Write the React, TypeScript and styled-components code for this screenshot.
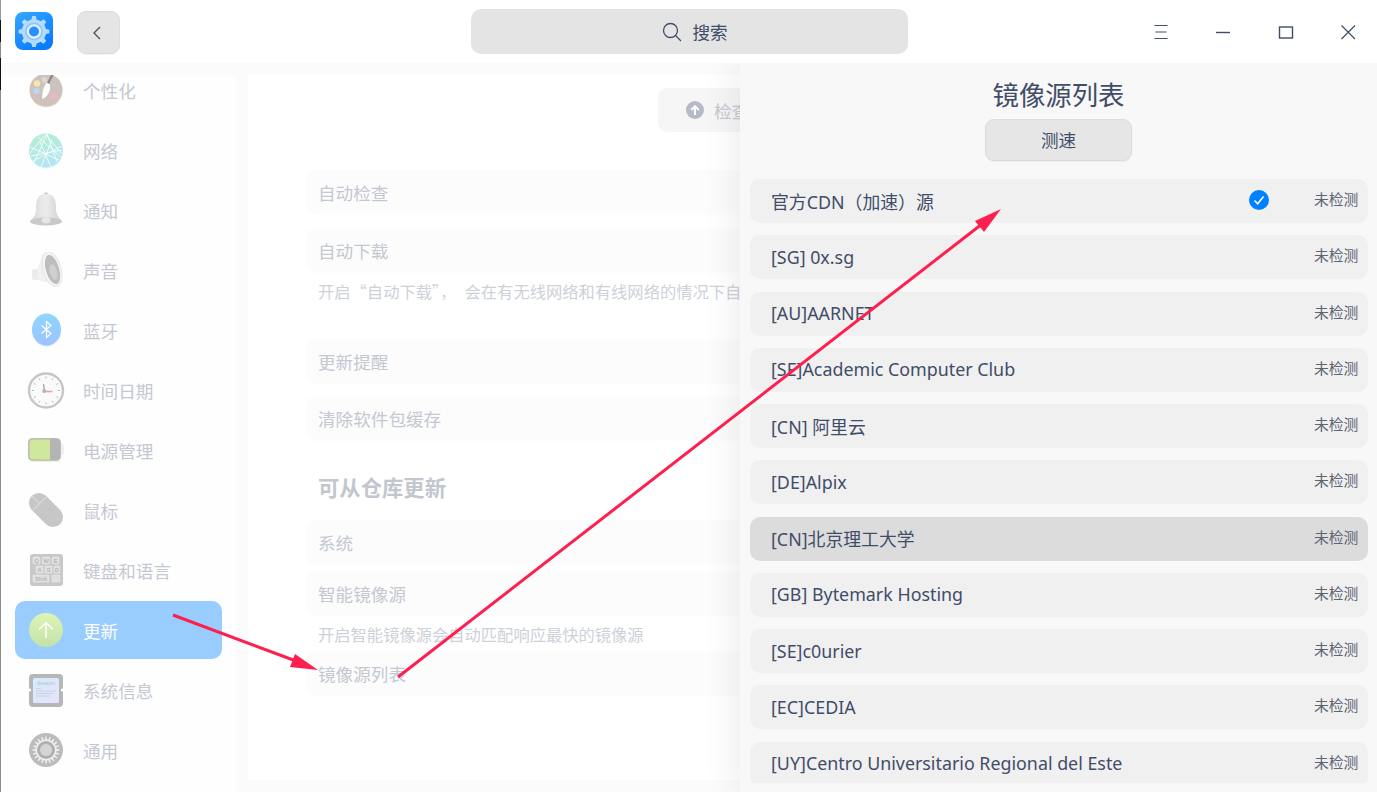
import React from "react";
import styled, { createGlobalStyle } from "styled-components";

const Global = createGlobalStyle`
  html, body { margin: 0; padding: 0; background: #fff; overflow: hidden; }
  body { font-family: "Noto Sans", "Noto Sans CJK SC", sans-serif; }
  * { box-sizing: border-box; }
`;

const Root = styled.div`
  position: relative;
  display: flex;
  width: 1377px;
  height: 792px;
  overflow: hidden;
`;
const EdgeStrip = styled.div`
  flex: 0 0 1px;
  background: linear-gradient(
    to bottom,
    #9a9a9a 0 20px,
    #111 20px 42px,
    #8a8a8a 42px 58px,
    #111 58px 90px,
    #8c8c8c 90px
  );
`;
const Window = styled.div`
  flex: 1;
  min-width: 0;
  display: flex;
  flex-direction: column;
`;
const TitleBar = styled.header`
  position: relative;
  z-index: 3;
  flex: 0 0 63px;
  background: #fff;
  display: flex;
  align-items: flex-start;
`;
const Logo = styled.div`
  margin: 12px 0 0 14px;
  width: 38px;
  height: 38px;
  flex: none;
  svg { display: block; }
`;
const BackButton = styled.button`
  margin: 11px 0 0 24px;
  width: 43px;
  height: 43px;
  flex: none;
  padding: 0 3px 0 0;
  display: flex;
  align-items: center;
  justify-content: center;
  background: #e5e5e5;
  border: 1px solid #dcdcdc;
  border-radius: 9px;
  box-shadow: 0 1px 1px rgba(0, 0, 0, 0.04);
`;
const SearchBox = styled.div`
  margin: 9px 0 0 351px;
  width: 437px;
  height: 45px;
  flex: none;
  display: flex;
  align-items: center;
  justify-content: center;
  gap: 10px;
  background: #e4e4e4;
  border-radius: 10px;
  color: #414d68;
  font-size: 17.6px;
  padding-left: 11px;
`;
const WindowControls = styled.div`
  margin-left: 243px;
  margin-top: 22px;
  display: flex;
  gap: 42.3px;
`;
const ControlGlyph = styled.svg`
  display: block;
  width: 20px;
  height: 20px;
  fill: none;
  stroke: #414d68;
  stroke-width: 1.2;
`;
const Body = styled.div`
  flex: 1;
  min-height: 0;
  display: flex;
  overflow: hidden;
`;
const Main = styled.div`
  flex: 0 0 739px;
  display: flex;
  padding-top: 12px;
  background: #fbfbfb;
  overflow: hidden;
`;
const Sidebar = styled.nav`
  flex: 0 0 235px;
  height: 100%;
  background: #fefefe;
  overflow: hidden;
`;
const SideList = styled.ul`
  list-style: none;
  margin: -14px 0 0;
  padding: 0 14px;
  display: flex;
  flex-direction: column;
  gap: 2px;
`;
const SideItem = styled.li<{ $active?: boolean }>`
  height: 58px;
  padding: 4px 0 0 11px;
  display: flex;
  align-items: center;
  gap: 17px;
  border-radius: 10px;
  font-size: 17.6px;
  background: ${(p) => (p.$active ? "#99ccff" : "transparent")};
  color: ${(p) => (p.$active ? "#ffffff" : "#c4c8d1")};
  svg { flex: none; display: block; }
`;
const SideLabel = styled.span`
  margin-top: -3px;
`;
const Card = styled.section`
  flex: 0 0 956px;
  margin-left: 12px;
  height: 705px;
  background: #fff;
  padding: 13px 58px 0;
  display: flex;
  flex-direction: column;
`;
const CheckButton = styled.div`
  align-self: center;
  width: 136px;
  height: 44px;
  flex: none;
  display: flex;
  align-items: center;
  gap: 10px;
  padding-left: 28px;
  border-radius: 9px;
  background: #f6f6f7;
  color: #c4c8d1;
  font-size: 17.6px;
`;
const SettingRow = styled.div<{ $top: number }>`
  flex: none;
  height: 45px;
  margin-top: ${(p) => p.$top}px;
  padding-left: 12px;
  display: flex;
  align-items: center;
  background: #fcfcfc;
  border-radius: 10px;
  color: #c4c8d1;
  font-size: 17.6px;
  white-space: nowrap;
`;
const Hint = styled.p<{ $top: number }>`
  flex: none;
  margin: ${(p) => p.$top}px 0 0;
  padding-left: 12px;
  height: 24px;
  line-height: 24px;
  color: #cdd1d9;
  font-family: "Noto Sans CJK SC", sans-serif;
  font-size: 16.3px;
  word-spacing: 4.5px;
  white-space: nowrap;
`;
const SectionTitle = styled.h2`
  flex: none;
  margin: 29px 0 0;
  padding-left: 12px;
  height: 36px;
  line-height: 36px;
  color: #c2c6cf;
  font-size: 21.33px;
  font-weight: 700;
`;
const Panel = styled.aside`
  position: relative;
  z-index: 2;
  flex: 1;
  min-width: 0;
  background: #f8f8f8;
  box-shadow: -6px 0 32px rgba(0, 0, 0, 0.07);
  display: flex;
  flex-direction: column;
  align-items: center;
  padding: 12px 0 9px;
`;
const PanelTitle = styled.h1`
  margin: 0;
  height: 40px;
  line-height: 40px;
  font-size: 26.4px;
  font-weight: 400;
  color: #414d68;
`;
const SpeedButton = styled.button`
  margin-top: 4px;
  flex: none;
  width: 147px;
  height: 42px;
  background: #e6e6e6;
  border: 1px solid #dcdcdc;
  border-radius: 9px;
  box-shadow: 0 1px 1px rgba(0, 0, 0, 0.05);
  color: #414d68;
  font-family: inherit;
  font-size: 17.6px;
  padding: 0 0 1px;
`;
const MirrorList = styled.ul`
  list-style: none;
  align-self: stretch;
  flex: 1;
  min-height: 0;
  overflow: hidden;
  margin: 18px 9px 0 10px;
  padding: 0;
  display: flex;
  flex-direction: column;
  gap: 12.25px;
`;
const MirrorRow = styled.li<{ $hover?: boolean }>`
  flex: none;
  height: 44px;
  padding: 0 9px 0 21px;
  display: flex;
  align-items: center;
  border-radius: 10px;
  background: ${(p) => (p.$hover ? "#dcdcdc" : "#f0f0f0")};
  color: #414d68;
  font-size: 17.85px;
`;
const MirrorName = styled.span`
  flex: 1;
  margin-top: -1px;
  white-space: nowrap;
`;
const Status = styled.span`
  flex: none;
  width: 45px;
  margin-left: 45px;
  margin-top: -5px;
  font-size: 14.8px;
  color: #5d6473;
  white-space: nowrap;
`;
const CheckMark = styled.svg`
  flex: none;
  width: 20px;
  height: 20px;
  margin-top: -3px;
  display: block;
`;
const Annotation = styled.svg`
  position: absolute;
  left: 0;
  top: 0;
  z-index: 5;
  pointer-events: none;
`;

function gear(cx: number, cy: number, ro: number, ri: number, teeth: number) {
  const pts: string[] = [];
  const step = (Math.PI * 2) / teeth;
  for (let i = 0; i < teeth; i++) {
    const a = i * step - Math.PI / 2;
    const list: [number, number][] = [
      [ri, a - step * 0.5],
      [ri, a - step * 0.27],
      [ro, a - step * 0.15],
      [ro, a + step * 0.15],
      [ri, a + step * 0.27],
    ];
    for (const [r, t] of list) {
      pts.push(`${(cx + r * Math.cos(t)).toFixed(2)},${(cy + r * Math.sin(t)).toFixed(2)}`);
    }
  }
  return pts.join(" ");
}

const LogoIcon = () => (
  <svg width="38" height="38" viewBox="0 0 38 38">
    <defs>
      <linearGradient id="lg" x1="0" y1="0" x2="0.6" y2="1">
        <stop offset="0" stopColor="#35a8ff" />
        <stop offset="1" stopColor="#0a7bff" />
      </linearGradient>
    </defs>
    <rect width="38" height="38" rx="8" fill="url(#lg)" />
    <polygon points={gear(19, 19.5, 15.5, 12.2, 8)} fill="#b5dcff" />
    <circle cx="19" cy="19.5" r="9" fill="#8cc6ff" />
    <circle cx="19" cy="19.5" r="7.2" fill="#e4f3ff" />
    <circle cx="19" cy="19.5" r="5" fill="#2a8fff" />
  </svg>
);

const Palette = () => (
  <svg width="40" height="40" viewBox="0 0 40 40">
    <circle cx="20" cy="19" r="16.5" fill="#f6e2d8" />
    <circle cx="20" cy="18" r="16.5" fill="#cec3bc" />
    <circle cx="11" cy="11.5" r="3.2" fill="#f7e5b0" />
    <circle cx="18.5" cy="8" r="2.8" fill="#ded6d0" />
    <circle cx="10.5" cy="19" r="3" fill="#b9d8f8" />
    <circle cx="28" cy="24" r="3" fill="#f5b3cb" />
    <path d="M26 1 L28 2 L23 12 L21 11 Z" fill="#8a8583" />
    <path d="M20.5 10.5 L24 12.5 C25 18 22 25 16 27 C17 23 15 20 20.5 10.5 Z" fill="#fff" />
  </svg>
);
const Network = () => (
  <svg width="40" height="40" viewBox="0 0 40 40">
    <defs>
      <linearGradient id="nw" x1="0" y1="0" x2="0.5" y2="1">
        <stop offset="0" stopColor="#b4f0d4" />
        <stop offset="1" stopColor="#b4e5f1" />
      </linearGradient>
    </defs>
    <circle cx="20" cy="19.5" r="17" fill="#dcf8ff" />
    <circle cx="20" cy="18.5" r="17" fill="url(#nw)" />
    <g stroke="#fff" strokeWidth="0.9" fill="none" opacity="0.9">
      <path d="M21 2 L8 31 M21 2 L31 30 M20 3 L36 22 M19 3 L4 21 M4 15 L33 28 M36 14 L7 29 M14 10 L25 35 M26 8 L15 35 M5 24 L36 18 M12 5 L36 26" />
    </g>
  </svg>
);
const Bell = () => (
  <svg width="40" height="40" viewBox="0 0 40 40">
    <defs>
      <linearGradient id="bl" x1="0" y1="0" x2="1" y2="0">
        <stop offset="0" stopColor="#d9d9d9" />
        <stop offset="0.5" stopColor="#ececec" />
        <stop offset="1" stopColor="#cfcfcf" />
      </linearGradient>
    </defs>
    <circle cx="20" cy="2" r="1.8" fill="#c6c6c6" />
    <path d="M20 2 C11 2 10 9 10 16 C10 22 8 25 5 28 L35 28 C32 25 30 22 30 16 C30 9 29 2 20 2 Z" fill="url(#bl)" />
    <ellipse cx="20" cy="29.5" rx="16" ry="4" fill="#c9c9c9" />
    <ellipse cx="20" cy="28.5" rx="4.5" ry="3" fill="#e6e6e6" />
  </svg>
);
const Speaker = () => (
  <svg width="40" height="40" viewBox="0 0 40 40">
    <rect x="6" y="17" width="10" height="11" rx="2" fill="#ececec" />
    <path d="M17 1 L12 16 L12 28 L34 34 Z" fill="#f1f1f1" />
    <ellipse cx="26" cy="17" rx="9" ry="18" fill="#f4f4f4" stroke="#e2e2e2" strokeWidth="0.8" transform="rotate(-16 26 17)" />
    <ellipse cx="26.5" cy="17.5" rx="6.6" ry="15" fill="#bdbdbd" transform="rotate(-16 26.5 17.5)" />
    <ellipse cx="27.5" cy="20" rx="3.6" ry="8" fill="#cfcfcf" transform="rotate(-16 27.5 20)" />
  </svg>
);
const Bluetooth = () => (
  <svg width="40" height="40" viewBox="0 0 40 40">
    <defs>
      <linearGradient id="bt" x1="0" y1="0" x2="0" y2="1">
        <stop offset="0" stopColor="#8fd6ff" />
        <stop offset="1" stopColor="#9dc3ff" />
      </linearGradient>
    </defs>
    <ellipse cx="20.5" cy="18.5" rx="14.5" ry="16" fill="#d7e8ff" />
    <ellipse cx="20.5" cy="17.5" rx="14.5" ry="16" fill="url(#bt)" />
    <path d="M15.5 13.5 L25 21.5 L20.5 25.5 L20.5 9.5 L25 13.5 L15.5 21.5" fill="none" stroke="#fff" strokeWidth="1.2" />
  </svg>
);
const Clock = () => (
  <svg width="40" height="40" viewBox="0 0 40 40">
    <circle cx="20" cy="18.5" r="17" fill="#fafafa" stroke="#c6c6c6" strokeWidth="2.4" />
    <g stroke="#b8b8b8" strokeWidth="1">
      <path d="M20 4.5V6.5 M20 30.5V32.5 M6 18.5H8 M32 18.5H34 M13 6.5L14 8.2 M27 6.5L26 8.2 M13 30.5L14 28.8 M27 30.5L26 28.8 M8 11.5L9.7 12.5 M32 11.5L30.3 12.5 M8 25.5L9.7 24.5 M32 25.5L30.3 24.5" />
    </g>
    <path d="M17.5 12 L18.5 19.5" stroke="#a9a9a9" strokeWidth="1.4" />
    <path d="M18.5 19.5 L26.5 19.5" stroke="#f3a0a0" strokeWidth="1.6" />
    <circle cx="18.2" cy="19" r="2" fill="#b4b4b4" />
  </svg>
);
const Battery = () => (
  <svg width="40" height="40" viewBox="0 0 40 40">
    <rect x="33" y="12" width="5" height="11" rx="2.5" fill="#efefef" />
    <rect x="2.5" y="6.5" width="32" height="22" rx="4" fill="#b4b4b4" stroke="#bdbdbd" />
    <path d="M3.5 11 a3.5 3.5 0 0 1 3.5 -3.5 H24 V27.5 H7 a3.5 3.5 0 0 1 -3.5 -3.5 Z" fill="#cfe89c" />
    <path d="M3 29.5 H34" stroke="#eef6d8" strokeWidth="1.2" />
  </svg>
);
const Mouse = () => (
  <svg width="40" height="40" viewBox="0 0 40 40">
    <g transform="rotate(-45 20 18)">
      <rect x="10" y="-2" width="20" height="40" rx="10" fill="#c7c7c7" />
      <path d="M10 9 H30 M20 -2 V9" stroke="#dcdcdc" strokeWidth="1" />
    </g>
  </svg>
);
const Keyboard = () => (
  <svg width="40" height="40" viewBox="0 0 40 40">
    <rect x="4" y="2" width="33" height="32" rx="3" fill="#c8c8c8" />
    <g fill="#dedede" stroke="#efefef" strokeWidth="0.5">
      <rect x="7" y="5" width="7" height="7" rx="1" />
      <rect x="16.5" y="5" width="7" height="7" rx="1" />
      <rect x="26" y="5" width="7" height="7" rx="1" />
      <rect x="10" y="14" width="7" height="7" rx="1" />
      <rect x="19" y="14" width="7" height="7" rx="1" />
      <rect x="28" y="14" width="6" height="7" rx="1" />
      <rect x="7" y="23" width="16" height="7" rx="1" />
      <rect x="26" y="23" width="8" height="7" rx="1" />
    </g>
    <g fill="#adadad" fontSize="6" fontFamily="Liberation Sans, sans-serif" textAnchor="middle">
      <text x="10.5" y="11">Q</text>
      <text x="20" y="11">W</text>
      <text x="29.5" y="11">E</text>
      <text x="13.5" y="20">A</text>
      <text x="22.5" y="20">S</text>
      <text x="31" y="20">D</text>
      <text x="15" y="29">Shift</text>
    </g>
  </svg>
);
const UpdateIcon = () => (
  <svg width="40" height="40" viewBox="0 0 40 40">
    <defs>
      <linearGradient id="up" x1="0" y1="0" x2="0" y2="1">
        <stop offset="0" stopColor="#def4b6" />
        <stop offset="1" stopColor="#c2e2a8" />
      </linearGradient>
    </defs>
    <circle cx="20" cy="18" r="17" fill="url(#up)" />
    <path d="M20 26 V11 M13 17.5 L20 10.5 L27 17.5" fill="none" stroke="#fff" strokeWidth="1.4" />
  </svg>
);
const InfoIcon = () => (
  <svg width="40" height="40" viewBox="0 0 40 40">
    <defs>
      <linearGradient id="si" x1="0" y1="0" x2="1" y2="1">
        <stop offset="0" stopColor="#d3ecfb" />
        <stop offset="1" stopColor="#e6e3fb" />
      </linearGradient>
    </defs>
    <rect x="3" y="2" width="34" height="33" rx="4" fill="#b7b7b7" />
    <rect x="7" y="6" width="26" height="25" rx="1.5" fill="url(#si)" />
    <circle cx="3.5" cy="18" r="1.6" fill="#fff" />
    <circle cx="36.5" cy="18" r="1.6" fill="#fff" />
    <text x="20" y="12.5" textAnchor="middle" fontSize="6" fill="#b9c0cc" fontFamily="Liberation Sans, sans-serif">deepin</text>
    <path d="M10 16.5H15 M10 19H30 M10 21.5H28 M10 24H24" stroke="#c4ccd8" strokeWidth="0.8" />
  </svg>
);
const General = () => (
  <svg width="40" height="40" viewBox="0 0 40 40">
    <circle cx="20" cy="18" r="17" fill="#bcbcbc" />
    <polygon points={gear(20, 18, 13.5, 10.5, 20)} fill="#f0f0f0" />
    <circle cx="20" cy="18" r="9" fill="#b0b0b0" />
    <circle cx="20" cy="18" r="6" fill="#d5d5d5" />
  </svg>
);

const sideItems: { label: string; icon: React.ReactNode; active?: boolean }[] = [
  { label: "个性化", icon: <Palette /> },
  { label: "网络", icon: <Network /> },
  { label: "通知", icon: <Bell /> },
  { label: "声音", icon: <Speaker /> },
  { label: "蓝牙", icon: <Bluetooth /> },
  { label: "时间日期", icon: <Clock /> },
  { label: "电源管理", icon: <Battery /> },
  { label: "鼠标", icon: <Mouse /> },
  { label: "键盘和语言", icon: <Keyboard /> },
  { label: "更新", icon: <UpdateIcon />, active: true },
  { label: "系统信息", icon: <InfoIcon /> },
  { label: "通用", icon: <General /> },
];

const mirrors = [
  "官方CDN（加速）源",
  "[SG] 0x.sg",
  "[AU]AARNET",
  "[SE]Academic Computer Club",
  "[CN] 阿里云",
  "[DE]Alpix",
  "[CN]北京理工大学",
  "[GB] Bytemark Hosting",
  "[SE]c0urier",
  "[EC]CEDIA",
  "[UY]Centro Universitario Regional del Este",
];

export default function App() {
  return (
    <Root>
      <Global />
      <EdgeStrip />
      <Window>
        <TitleBar>
          <Logo>
            <LogoIcon />
          </Logo>
          <BackButton aria-label="返回">
            <svg width="12" height="16" viewBox="0 0 12 16" fill="none" stroke="#414d68" strokeWidth="1.3">
              <path d="M9 2 L3 8 L9 14" />
            </svg>
          </BackButton>
          <SearchBox>
            <svg width="20" height="20" viewBox="0 0 20 20" fill="none" stroke="#414d68" strokeWidth="1.3">
              <circle cx="8.5" cy="8.5" r="7" />
              <path d="M13.5 13.5 L19 19" />
            </svg>
            搜索
          </SearchBox>
          <WindowControls>
            <ControlGlyph viewBox="0 0 20 20">
              <path d="M3.5 3.5H16.5 M4.5 10H15.5 M3.5 16.5H16.5" />
            </ControlGlyph>
            <ControlGlyph viewBox="0 0 20 20">
              <path d="M3 10.5H17" strokeWidth="1.4" />
            </ControlGlyph>
            <ControlGlyph viewBox="0 0 20 20">
              <rect x="3.5" y="5" width="13" height="11" strokeWidth="1.4" />
            </ControlGlyph>
            <ControlGlyph viewBox="0 0 20 20">
              <path d="M3.5 3.5L17 17 M17 3.5L3.5 17" />
            </ControlGlyph>
          </WindowControls>
        </TitleBar>
        <Body>
          <Main>
            <Sidebar>
              <SideList>
                {sideItems.map((it) => (
                  <SideItem key={it.label} $active={it.active}>
                    {it.icon}
                    <SideLabel>{it.label}</SideLabel>
                  </SideItem>
                ))}
              </SideList>
            </Sidebar>
            <Card>
              <CheckButton>
                <svg width="18" height="18" viewBox="0 0 18 18">
                  <circle cx="9" cy="9" r="9" fill="#b6bac6" />
                  <path d="M9 14V5.5 M5.2 9L9 5.2L12.8 9" fill="none" stroke="#fff" strokeWidth="2" />
                </svg>
                检查更新
              </CheckButton>
              <SettingRow $top={38}>自动检查</SettingRow>
              <SettingRow $top={13}>自动下载</SettingRow>
              <Hint $top={6}>开启“自动下载”， 会在有无线网络和有线网络的情况下自动下载更新</Hint>
              <SettingRow $top={36}>更新提醒</SettingRow>
              <SettingRow $top={12}>清除软件包缓存</SettingRow>
              <SectionTitle>可从仓库更新</SectionTitle>
              <SettingRow $top={14}>系统</SettingRow>
              <SettingRow $top={6}>智能镜像源</SettingRow>
              <Hint $top={6}>开启智能镜像源会自动匹配响应最快的镜像源</Hint>
              <SettingRow $top={5}>镜像源列表</SettingRow>
            </Card>
          </Main>
          <Panel>
            <PanelTitle>镜像源列表</PanelTitle>
            <SpeedButton>测速</SpeedButton>
            <MirrorList>
              {mirrors.map((m, i) => (
                <MirrorRow key={m} $hover={i === 6}>
                  <MirrorName>{m}</MirrorName>
                  {i === 0 && (
                    <CheckMark viewBox="0 0 20 20">
                      <circle cx="10" cy="10" r="10" fill="#0081ff" />
                      <path d="M5.5 10.5 L8.7 13.8 L14.5 6.5" fill="none" stroke="#fff" strokeWidth="1.5" />
                    </CheckMark>
                  )}
                  <Status>未检测</Status>
                </MirrorRow>
              ))}
            </MirrorList>
          </Panel>
        </Body>
      </Window>
      <Annotation width="1377" height="792" viewBox="0 0 1377 792">
        <path d="M173 615 L296 661" stroke="#ff1f4f" strokeWidth="3" fill="none" />
        <polygon points="318,670 290,667 295,654" fill="#ff1f4f" />
        <path d="M398 677 L982 224" stroke="#ff1f4f" strokeWidth="3" fill="none" />
        <polygon points="1001,209 975,221 984,232" fill="#ff1f4f" />
      </Annotation>
    </Root>
  );
}
